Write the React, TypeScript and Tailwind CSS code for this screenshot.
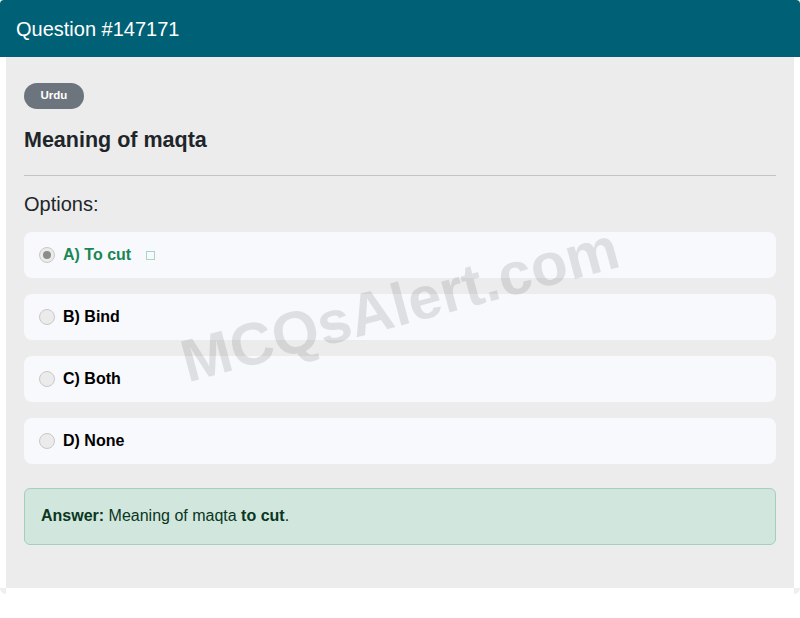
const OPTIONS = [
  { id: 'a', label: 'A) To cut', correct: true },
  { id: 'b', label: 'B) Bind', correct: false },
  { id: 'c', label: 'C) Both', correct: false },
  { id: 'd', label: 'D) None', correct: false },
];

function Radio({ checked }: { checked: boolean }) {
  return (
    <span className="w-[16px] h-[16px] rounded-full border border-[#c9c9c9] bg-[#ebebeb] flex items-center justify-center shrink-0">
      {checked && <span className="w-[8px] h-[8px] rounded-full bg-[#8c8c8c]" />}
    </span>
  );
}

export default function App() {
  return (
    <div className="w-[800px] h-[618px] bg-white font-['Liberation_Sans',Arial,sans-serif]">
      <div className="h-[57px] bg-[#006075] rounded-t-[4px] flex items-center px-4">
        <h1 className="text-white text-[20px] leading-none">Question #147171</h1>
      </div>

      <div className="relative mx-[6px] bg-[#ececec] px-[18px] pt-[25px] pb-[43px] overflow-hidden">
        <span className="inline-flex items-center h-[26px] px-[16.5px] rounded-full bg-[#6c757d] text-white text-[11.5px] font-bold">
          Urdu
        </span>

        <h2 className="mt-[18px] text-[21.5px] leading-[26px] font-bold text-[#212529]">
          Meaning of maqta
        </h2>

        <hr className="mt-[22px] border-0 border-t border-[#c4c4c4]" />

        <p className="mt-[16px] text-[20px] leading-[24px] text-[#212529]">Options:</p>

        <ul className="mt-[16px] flex flex-col gap-4">
          {OPTIONS.map((o) => (
            <li
              key={o.id}
              className="h-[46px] rounded-[8px] bg-[#f8f9fc] flex items-center pl-[15px] gap-[8px]"
            >
              <Radio checked={o.correct} />
              <span
                className={`text-[16px] font-bold ${o.correct ? 'text-[#198754]' : 'text-black'}`}
              >
                {o.label}
              </span>
              {o.correct && (
                <span className="ml-[7px] mt-[2px] w-[9px] h-[9px] border border-[#a9d6c1]" />
              )}
            </li>
          ))}
        </ul>

        <div className="mt-[24px] h-[57px] rounded-[6px] border border-[#a3cfbb] bg-[#d1e7dd] flex items-center px-[16px] text-[16px] text-[#0a3622]">
          <p>
            <b>Answer:</b> Meaning of maqta <b>to cut</b>.
          </p>
        </div>

        <div className="pointer-events-none absolute left-0 right-0 top-[218px] flex justify-center">
          <span className="-rotate-[15deg] text-[60px] font-bold leading-none text-black/10 whitespace-nowrap">
            MCQsAlert.com
          </span>
        </div>
      </div>

      <div className="h-[6px] flex">
        <div className="w-[6px] bg-[#efefef] rounded-bl-[6px]" />
        <div className="flex-1" />
        <div className="w-[6px] bg-[#efefef] rounded-br-[6px]" />
      </div>
    </div>
  );
}
